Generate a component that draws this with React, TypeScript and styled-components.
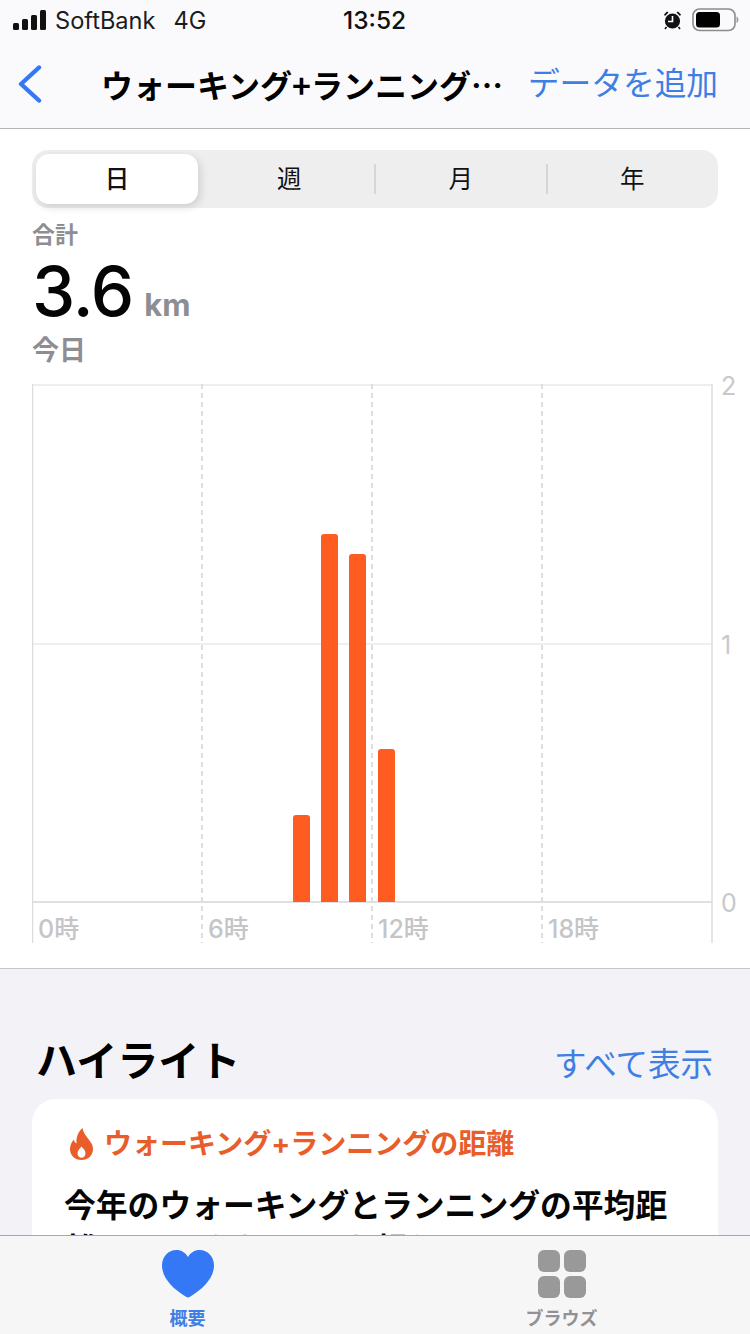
import React from "react";
import styled, { createGlobalStyle } from "styled-components";

const FONT = `Inter, "Noto Sans CJK JP", "Liberation Sans", sans-serif`;
const BLUE = "#3f7fe3";

const Global = createGlobalStyle`
  html, body { margin: 0; padding: 0; background: #fff; }
  #root { width: 750px; height: 1334px; overflow: hidden; }
  * { box-sizing: border-box; }
`;

const Page = styled.div`
  position: relative;
  width: 750px;
  height: 1334px;
  overflow: hidden;
  display: flex;
  flex-direction: column;
  font-family: ${FONT};
  background: #fff;
  color: #000;
`;

const Header = styled.header`
  height: 129px;
  flex: none;
  background: #fafafc;
  border-bottom: 1px solid #b4b4b6;
`;

const StatusBar = styled.div`
  height: 40px;
  display: flex;
  align-items: center;
  padding: 0 11px 0 13px;
`;

const Carrier = styled.div`
  display: flex;
  align-items: center;
  width: 330px;
  font-size: 23.6px;
  color: #1c1c1e;
  svg { margin-right: 9px; }
  span + span { margin-left: 18px; }
`;

const Clock = styled.div`
  width: 320px;
  font-size: 24.5px;
  font-weight: 500;
  color: #111;
`;

const StatusIcons = styled.div`
  display: flex;
  align-items: center;
  gap: 10px;
`;

const NavBar = styled.nav`
  height: 88px;
  display: flex;
  align-items: center;
  padding: 0 32px 0 18px;
`;

const NavTitle = styled.div`
  margin-left: 59px;
  width: 427px;
  font-family: "Noto Sans CJK JP", sans-serif;
  font-size: 32px;
  font-weight: 700;
  white-space: nowrap;
  line-height: 1;
`;

const NavAction = styled.div`
  font-size: 31.7px;
  color: ${BLUE};
  white-space: nowrap;
  line-height: 1;
`;

const Main = styled.section`
  height: 840px;
  flex: none;
  padding-top: 21px;
  background: #fff;
  border-bottom: 1px solid #c6c6c8;
`;

const Segments = styled.div`
  margin: 0 32px;
  height: 58px;
  border-radius: 16px;
  background: #eeeeef;
  display: grid;
  grid-template-columns: repeat(4, 1fr);
`;

const Segment = styled.div<{ $active?: boolean; $divider?: boolean }>`
  position: relative;
  display: flex;
  align-items: center;
  justify-content: center;
  padding-bottom: 3px;
  margin: ${(p) => (p.$active ? "4px 5.5px 4px 4px" : "0")};
  font-size: 24.5px;
  color: #111;
  font-weight: ${(p) => (p.$active ? 500 : 400)};
  border-radius: 13px;
  background: ${(p) => (p.$active ? "#fff" : "transparent")};
  box-shadow: ${(p) => (p.$active ? "2px 3px 8px rgba(0,0,0,.14)" : "none")};
  &::before {
    content: "";
    display: ${(p) => (p.$divider ? "block" : "none")};
    position: absolute;
    left: -1px;
    top: 14px;
    bottom: 14px;
    width: 2px;
    background: #d6d6d8;
  }
`;

const Summary = styled.div`
  padding: 12px 32px 0;
`;

const SummaryLabel = styled.div`
  font-size: 23px;
  font-weight: 600;
  line-height: 30px;
  color: #8e8e92;
`;

const ValueRow = styled.div`
  display: flex;
  align-items: baseline;
  gap: 11px;
  height: 74px;
  line-height: 74px;
  margin-top: 4px;
`;

const Value = styled.span`
  font-size: 69px;
  font-weight: 500;
  letter-spacing: -1px;
  color: #050505;
  margin-left: 0;
`;

const Unit = styled.span`
  font-size: 31px;
  font-weight: 700;
  color: #8e8e92;
`;

const DateLabel = styled(SummaryLabel)`
  font-size: 27px;
  line-height: 34px;
  margin-top: 6px;
`;

const Chart = styled.div`
  position: relative;
  margin: 16px 0 0 32px;
  width: 718px;
  height: 559px;
  svg { display: block; }
`;

const XLabels = styled.div`
  position: absolute;
  left: 0;
  top: 531px;
  width: 680px;
  display: grid;
  grid-template-columns: repeat(4, 170px);
`;

const XLabel = styled.span`
  padding-left: 6px;
  font-size: 25px;
  line-height: 28px;
  font-weight: 500;
  color: #c5c5c7;
`;

const YLabel = styled.span<{ $top: number }>`
  position: absolute;
  left: 689px;
  top: ${(p) => p.$top}px;
  font-size: 25px;
  line-height: 28px;
  color: #c8c8ca;
`;

const Lower = styled.section`
  flex: 1;
  background: #f2f2f7;
  padding: 62px 32px 0;
`;

const SectionHead = styled.div`
  display: flex;
  align-items: center;
  justify-content: space-between;
  height: 60px;
  padding: 0 5px 0 4px;
`;

const SectionTitle = styled.h2`
  margin: 0;
  font-size: 41px;
  font-weight: 700;
  line-height: 60px;
`;

const ShowAll = styled.span`
  font-size: 32.5px;
  color: ${BLUE};
`;

const Card = styled.article`
  margin-top: 8px;
  height: 200px;
  padding: 25px 32px 0;
  background: #fff;
  border-radius: 24px 24px 0 0;
`;

const CardTitle = styled.div`
  display: flex;
  align-items: center;
  gap: 11px;
  margin-left: 6px;
  font-size: 28px;
  font-weight: 700;
  line-height: 40px;
  color: #e85d2a;
  white-space: nowrap;
`;

const CardBody = styled.p`
  margin: 20px 0 0;
  font-size: 31.8px;
  font-weight: 600;
  line-height: 44px;
  color: #050505;
  width: 622px;
`;

const TabBar = styled.footer`
  position: absolute;
  left: 0;
  right: 0;
  bottom: 0;
  height: 99px;
  display: grid;
  grid-template-columns: 375px 373px;
  background: #f6f6f7;
  border-top: 1px solid #a8a8aa;
`;

const Tab = styled.div<{ $active?: boolean }>`
  display: flex;
  flex-direction: column;
  align-items: center;
  padding-top: 14px;
  font-size: 18px;
  font-weight: 600;
  line-height: 22px;
  color: ${(p) => (p.$active ? BLUE : "#929294")};
  svg { display: block; margin-bottom: 10px; }
`;

const Bars = [
  { x: 261, top: 431 },
  { x: 289, top: 150 },
  { x: 317, top: 170 },
  { x: 346, top: 365 },
];

const BASE = 518;

const ChartPlot = () => (
  <svg width="681" height="559" viewBox="0 0 681 559" aria-hidden>
    <g strokeWidth="2" fill="none">
      <path d="M0 1H680" stroke="#eeeeef" />
      <path d="M0 260H680" stroke="#efeff0" />
      <path d="M0 518H680" stroke="#e0e0e2" />
    </g>
    <g stroke="#dcdcde" strokeWidth="1.5" fill="none">
      <path d="M0.5 0V559" />
      <path d="M680 0V559" />
    </g>
    <g stroke="#dedee0" strokeWidth="2" strokeDasharray="5 4" fill="none">
      <path d="M170 0V559" />
      <path d="M340 0V559" />
      <path d="M510 0V559" />
    </g>
    {Bars.map((b) => (
      <path
        key={b.x}
        d={`M${b.x} ${BASE}V${b.top + 3}Q${b.x} ${b.top} ${b.x + 3} ${b.top}H${b.x + 14}Q${b.x + 17} ${b.top} ${b.x + 17} ${b.top + 3}V${BASE}Z`}
        fill="#ff5c22"
      />
    ))}
  </svg>
);

const SignalIcon = () => (
  <svg width="33" height="21" viewBox="0 0 33 21">
    <rect x="0" y="13" width="6" height="7" rx="1.5" fill="#111" />
    <rect x="9" y="9" width="6" height="11" rx="1.5" fill="#111" />
    <rect x="18" y="5" width="6" height="15" rx="1.5" fill="#111" />
    <rect x="27" y="0" width="6" height="20" rx="1.5" fill="#111" />
  </svg>
);

const AlarmIcon = () => (
  <svg width="19" height="20" viewBox="0 0 19 20">
    <circle cx="9.5" cy="11" r="7.6" fill="#111" />
    <path d="M1 4.500 4 1.500 5.500 2.500 2 6ZM18 4.500 15 1.500 13.500 2.500 17 6Z" fill="#111" />
    <path d="M3.500 17 2 19M15.500 17 17 19" stroke="#111" strokeWidth="1.6" />
    <path d="M9.500 6v5.500H5" stroke="#fff" strokeWidth="1.6" fill="none" />
  </svg>
);

const BatteryIcon = () => (
  <svg width="47" height="24" viewBox="0 0 47 24">
    <rect x="1" y="1" width="42" height="21.5" rx="6.5" fill="none" stroke="#8c8c8e" strokeWidth="1.6" />
    <rect x="4" y="4" width="24" height="15.5" rx="3.5" fill="#000" />
    <path d="M44.500 8.500c1.500.5 2 2 2 3.200s-.5 2.700-2 3.200Z" fill="#a0a0a2" />
  </svg>
);

const BackIcon = () => (
  <svg width="24" height="38" viewBox="0 0 24 38" fill="none">
    <path d="M21 2.500 3 19l18 16.500" stroke="#3478f6" strokeWidth="4.4" strokeLinecap="round" strokeLinejoin="round" />
  </svg>
);

const FlameIcon = () => (
  <svg width="23" height="32" viewBox="0 0 23 32" style={{ flex: "none" }}>
    <path
      fillRule="evenodd"
      fill="#e85d2a"
      d="M12.500 0c1 5 3 7 5.500 10.500C20.500 14 23 16.500 23 21c0 6.500-5 11-11.500 11S0 27.500 0 21c0-4 1.800-7 3.800-9.500.4 2 1.200 3.200 2.700 4C6 9.500 8 4 12.500 0ZM11.500 18.500c-2 2.400-4 4-4 7 0 2.500 1.800 4.200 4 4.200s4-1.700 4-4.200c0-3-2-4.600-4-7Z"
    />
  </svg>
);

const HeartIcon = () => (
  <svg width="52" height="48" viewBox="0 0 52 48">
    <path
      fill="#3478f6"
      d="M26 47.500c-1 0-2-.6-3.200-1.400C11.500 38.800 0 28.500 0 15.500 0 6.500 6.300 0 14.300 0 19.500 0 23.600 2.700 26 7c2.400-4.300 6.500-7 11.700-7C45.700 0 52 6.500 52 15.500c0 13-11.500 23.300-22.800 30.600-1.200.8-2.200 1.400-3.200 1.400Z"
    />
  </svg>
);

const BrowseIcon = () => (
  <svg width="48" height="48" viewBox="0 0 48 48" fill="#999">
    <rect x="0" y="0" width="22" height="22" rx="6" />
    <rect x="26" y="0" width="22" height="22" rx="6" />
    <rect x="0" y="26" width="22" height="22" rx="6" />
    <rect x="26" y="26" width="22" height="22" rx="6" />
  </svg>
);

export default function App() {
  return (
    <>
      <Global />
      <Page>
        <Header>
          <StatusBar>
            <Carrier>
              <SignalIcon />
              <span>SoftBank</span>
              <span>4G</span>
            </Carrier>
            <Clock>13:52</Clock>
            <StatusIcons>
              <AlarmIcon />
              <BatteryIcon />
            </StatusIcons>
          </StatusBar>
          <NavBar>
            <BackIcon />
            <NavTitle>ウォーキング+ランニング…</NavTitle>
            <NavAction>データを追加</NavAction>
          </NavBar>
        </Header>
        <Main>
          <Segments>
            <Segment $active>日</Segment>
            <Segment>週</Segment>
            <Segment $divider>月</Segment>
            <Segment $divider>年</Segment>
          </Segments>
          <Summary>
            <SummaryLabel>合計</SummaryLabel>
            <ValueRow>
              <Value>3.6</Value>
              <Unit>km</Unit>
            </ValueRow>
            <DateLabel>今日</DateLabel>
          </Summary>
          <Chart>
            <ChartPlot />
            <XLabels>
              <XLabel>0時</XLabel>
              <XLabel>6時</XLabel>
              <XLabel>12時</XLabel>
              <XLabel>18時</XLabel>
            </XLabels>
            <YLabel $top={-12}>2</YLabel>
            <YLabel $top={247}>1</YLabel>
            <YLabel $top={505}>0</YLabel>
          </Chart>
        </Main>
        <Lower>
          <SectionHead>
            <SectionTitle>ハイライト</SectionTitle>
            <ShowAll>すべて表示</ShowAll>
          </SectionHead>
          <Card>
            <CardTitle>
              <FlameIcon />
              ウォーキング+ランニングの距離
            </CardTitle>
            <CardBody>今年のウォーキングとランニングの平均距離は1日あたり3 kmを超えています</CardBody>
          </Card>
        </Lower>
        <TabBar>
          <Tab $active>
            <HeartIcon />
            概要
          </Tab>
          <Tab>
            <BrowseIcon />
            ブラウズ
          </Tab>
        </TabBar>
      </Page>
    </>
  );
}
